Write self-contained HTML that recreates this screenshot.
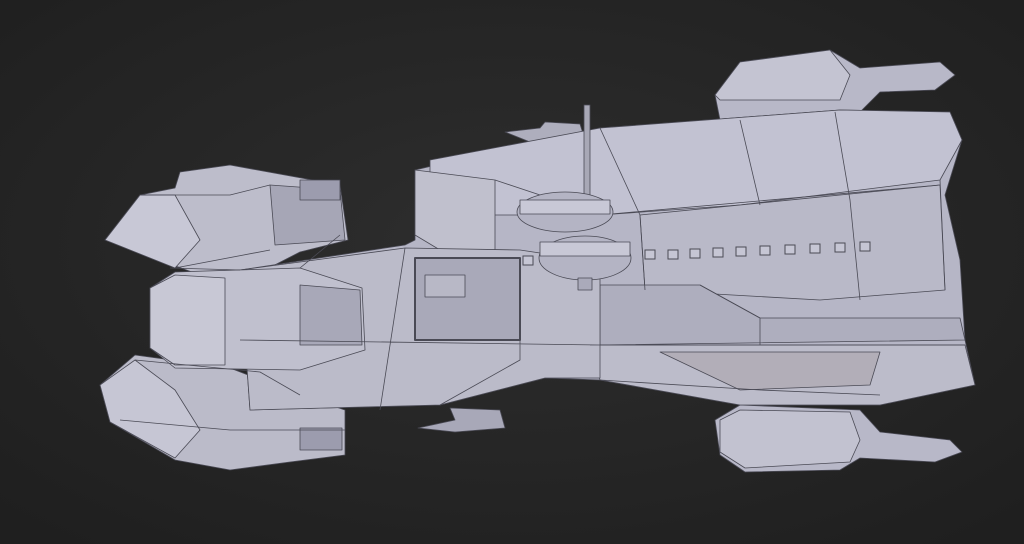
<!DOCTYPE html><html><head><style>html,body{margin:0;padding:0;width:1024px;height:544px;overflow:hidden;background:#262626}</style></head><body>
<svg width="1024" height="544" viewBox="0 0 1024 544" xmlns="http://www.w3.org/2000/svg">
<defs><radialGradient id="bg" cx="50%" cy="45%" r="70%"><stop offset="0" stop-color="#2e2e2e"/><stop offset="1" stop-color="#1f1f1f"/></radialGradient></defs>
<rect width="1024" height="544" fill="url(#bg)"/>
<g stroke="#4a4a55" stroke-width="0.8" stroke-linejoin="round">
<!-- top turret -->
<polygon points="715,95 740,62 830,50 860,68 940,62 955,75 935,90 880,92 860,112 720,120" fill="#b8b8c8"/>
<polygon points="715,95 740,62 830,50 850,75 840,100 720,100" fill="#c4c4d2"/>
<!-- bottom turret -->
<polygon points="715,420 740,405 860,410 880,432 950,440 962,452 935,462 860,458 840,470 745,472 720,455" fill="#b8b8c8"/>
<polygon points="720,420 740,410 850,412 860,440 850,462 745,468 720,452" fill="#c2c2d0"/>
<!-- small bottom guns -->
<polygon points="418,428 455,420 450,408 500,410 505,428 455,432" fill="#a8a8b8"/>
<!-- small top gun -->
<polygon points="505,132 540,128 545,122 580,124 585,140 545,148" fill="#aeaebd"/>
<!-- upper engine pod -->
<polygon points="105,240 140,195 175,188 180,172 230,165 285,175 340,185 348,240 300,252 265,270 200,275" fill="#bdbdcb"/>
<polygon points="105,240 140,195 175,195 200,240 175,268" fill="#c8c8d6"/>
<polygon points="270,185 340,190 345,240 275,245" fill="#a6a6b6"/>
<rect x="300" y="180" width="40" height="20" fill="#9c9cae"/>
<!-- lower engine pod -->
<polygon points="100,385 135,355 230,368 300,395 345,410 345,455 290,462 230,470 175,460 110,422" fill="#bbbbc9"/>
<polygon points="100,385 135,360 175,390 200,430 175,458 110,422" fill="#c6c6d4"/>
<rect x="300" y="428" width="42" height="22" fill="#9c9cae"/>
<!-- main hull -->
<polygon points="415,170 500,150 600,128 840,110 950,112 962,140 945,195 960,260 965,340 975,385 880,405 740,405 600,380 545,378 440,405 250,410 240,270 405,245 415,240" fill="#b6b6c6"/>
<polygon points="430,160 600,128 840,110 950,112 962,140 940,180 740,205 600,215 430,215" fill="#c2c2d2"/>
<polygon points="415,170 495,180 495,250 440,250 415,235" fill="#c0c0cd"/>
<polygon points="640,215 940,185 945,290 820,300 645,290" fill="#b9b9c8"/>
<polygon points="600,285 700,285 760,318 960,318 965,340 600,345" fill="#aeaebe"/>
<polygon points="590,345 965,345 975,385 880,405 740,405 600,380" fill="#bcbcca"/>
<polygon points="660,352 880,352 870,385 740,390" fill="#b2aeb8"/>
<!-- middle section -->
<polygon points="240,270 405,248 520,250 600,262 600,378 545,378 440,405 250,410" fill="#bbbbc9"/>
<polygon points="415,258 520,258 520,340 415,340" fill="#a9a9b9" stroke-width="2"/>
<rect x="425" y="275" width="40" height="22" fill="#b8b8c6"/>
<!-- center engine -->
<polygon points="150,288 175,272 300,268 362,288 365,350 300,370 175,368 150,348" fill="#c0c0ce"/>
<polygon points="300,285 360,290 362,345 300,345" fill="#a8a8b8"/>
<polygon points="150,288 175,275 225,278 225,365 175,365 150,348" fill="#c8c8d5"/>
<!-- hull lines -->
<path d="M600,128 L640,215 L645,290 M740,120 L760,205 M835,112 L850,200 L860,300 M940,180 L945,290 M495,180 L600,215 L940,185 M590,345 L965,345 M600,380 L760,390 L880,395 M700,285 L760,318 M760,318 L760,345 M520,258 L520,360 L440,405 M405,248 L380,410 M240,340 L600,345 M300,268 L340,235 M170,268 L240,270" fill="none"/>
<path d="M140,195 L230,195 L270,185 M175,268 L270,250 M135,360 L260,372 L300,395 M120,420 L230,430 L345,430" fill="none"/>
<!-- mast -->
<rect x="584" y="105" width="6" height="92" fill="#a8a8b6"/>
<!-- domes -->
<ellipse cx="565" cy="212" rx="48" ry="20" fill="#b4b4c4"/>
<rect x="520" y="200" width="90" height="14" fill="#c8c8d6"/>
<ellipse cx="585" cy="258" rx="46" ry="22" fill="#b4b4c4"/>
<rect x="540" y="242" width="90" height="14" fill="#c8c8d6"/>
<rect x="578" y="278" width="14" height="12" fill="#aaaaba"/>
</g>
<g fill="#c6c6d4" stroke="#4a4a55" stroke-width="1">
<rect x="645" y="250" width="10" height="9"/><rect x="668" y="250" width="10" height="9"/><rect x="690" y="249" width="10" height="9"/><rect x="713" y="248" width="10" height="9"/><rect x="736" y="247" width="10" height="9"/><rect x="760" y="246" width="10" height="9"/><rect x="785" y="245" width="10" height="9"/><rect x="810" y="244" width="10" height="9"/><rect x="835" y="243" width="10" height="9"/><rect x="860" y="242" width="10" height="9"/><rect x="523" y="256" width="10" height="9"/>
</g>
</svg>
</body></html>
